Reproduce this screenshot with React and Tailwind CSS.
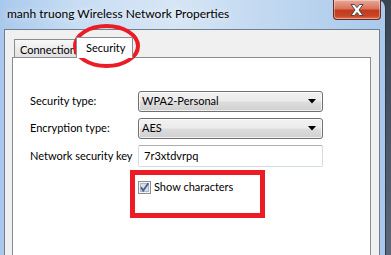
const font = { fontFamily: 'Lato, "Noto Sans", Arial, sans-serif' };

const CloseButton = () => (
  <div className="mt-0 flex h-[20px] w-[48px] items-center justify-center rounded-b-[4px] border border-t-0 border-[#6b2b1f] bg-[linear-gradient(to_bottom,#e9a999_0%,#d9745c_45%,#c23a1c_55%,#c9452a_85%,#e07a5a_100%)] shadow-[inset_0_0_0_1px_rgba(255,255,255,0.35)]">
    <svg width="16" height="14" viewBox="0 0 16 14">
      <path
        d="M2 1.5 L5.5 1.5 L8 4.6 L10.5 1.5 L14 1.5 L10 7 L14 12.5 L10.5 12.5 L8 9.4 L5.5 12.5 L2 12.5 L6 7 Z"
        fill="#ffffff"
        stroke="#4a4a4a"
        strokeWidth="1"
        strokeLinejoin="round"
      />
    </svg>
  </div>
);

const Dropdown = ({ value }) => (
  <div className="flex h-[21px] w-[185px] items-center justify-between rounded-[3px] border border-[#707070] bg-[linear-gradient(to_bottom,#f2f2f2_0%,#ebebeb_48%,#dddddd_52%,#cfcfcf_100%)] pl-[3px] pr-[6px] text-black shadow-[inset_0_0_0_1px_rgba(255,255,255,0.7)]">
    <span>{value}</span>
    <svg width="8" height="5" viewBox="0 0 8 5">
      <path d="M0 0 L8 0 L4 4.5 Z" fill="#000" />
    </svg>
  </div>
);

const Checkbox = () => (
  <svg width="13" height="13" viewBox="0 0 13 13">
    <rect x="0.5" y="0.5" width="12" height="12" fill="#f4f4f4" stroke="#8e8f8f" />
    <rect x="2.5" y="2.5" width="8" height="8" fill="#d8dde6" stroke="#b0b6c0" />
    <path d="M3 6.2 L5.2 9.6 L10.3 2.2" fill="none" stroke="#4a5f97" strokeWidth="1.8" />
  </svg>
);

export default function App() {
  return (
    <div className="relative h-[255px] w-[391px] overflow-hidden bg-[linear-gradient(to_bottom,#3a4450,#5d6775)] text-[11px] text-black" style={font}>
      <div className="flex h-full w-[386px] flex-col rounded-tr-[8px] border-r border-[#2f3a48] bg-[linear-gradient(to_right,#a9c9ec_0%,#c8ddf3_20%,#d7e6f5_45%,#c1d8f0_70%,#a9c9ec_100%)]">
        <div className="flex h-[29px] shrink-0 items-start justify-between">
          <div className="pl-[7px] pt-[6px] text-[12px] leading-[16px] [text-shadow:0_0_6px_rgba(255,255,255,0.9)]">
            manh truong Wireless Network Properties
          </div>
          <div className="mr-[4px]">
            <CloseButton />
          </div>
        </div>
        <div className="ml-[4px] mr-[5px] flex flex-1 flex-col border border-b-0 border-[#6f7f92] bg-[#f0f0f0] pl-[7px] pr-[8px] pt-[6px]">
          <div className="flex h-[21px] items-end pl-[2px]">
            <div className="flex h-[18px] w-[64px] items-center whitespace-nowrap border border-b-0 border-[#898c95] bg-[linear-gradient(to_bottom,#f8f8f8,#e1e1e1)] pl-[5px] pt-[1px] leading-none">
              Connection
            </div>
            <div className="z-10 -mb-px -ml-[2px] flex h-[21px] w-[57px] items-center border border-b-0 border-[#898c95] bg-white pb-[2px] pl-[9px] leading-none">
              Security
            </div>
          </div>
          <div className="flex-1 border border-b-0 border-[#898c95] bg-white pl-[17px] pt-[33px]">
            <div className="flex flex-col gap-[6px]">
              <div className="flex items-center">
                <div className="w-[108px] whitespace-nowrap">Security type:</div>
                <Dropdown value="WPA2-Personal" />
              </div>
              <div className="flex items-center">
                <div className="w-[108px] whitespace-nowrap">Encryption type:</div>
                <Dropdown value="AES" />
              </div>
              <div className="flex items-center">
                <div className="w-[108px] whitespace-nowrap">Network security key</div>
                <div className="flex h-[22px] w-[185px] items-center rounded-[2px] border border-[#d5dbe3] border-t-[#abadb3] bg-white pl-[5px]">
                  7r3xtdvrpq
                </div>
              </div>
            </div>
            <div className="ml-[108px] mt-[12px] flex items-center gap-[3px]">
              <Checkbox />
              <span>Show characters</span>
            </div>
          </div>
        </div>
      </div>

      {/* annotations drawn over the dialog */}
      <svg className="pointer-events-none absolute left-0 top-0" width="391" height="255">
        <ellipse cx="106.5" cy="46" rx="31.5" ry="20" fill="none" stroke="#ec1c24" strokeWidth="4" />
      </svg>
      <div className="pointer-events-none absolute left-[130px] top-[170px] h-[48px] w-[135px] border-[5px] border-[#ed1c24]" />
    </div>
  );
}
